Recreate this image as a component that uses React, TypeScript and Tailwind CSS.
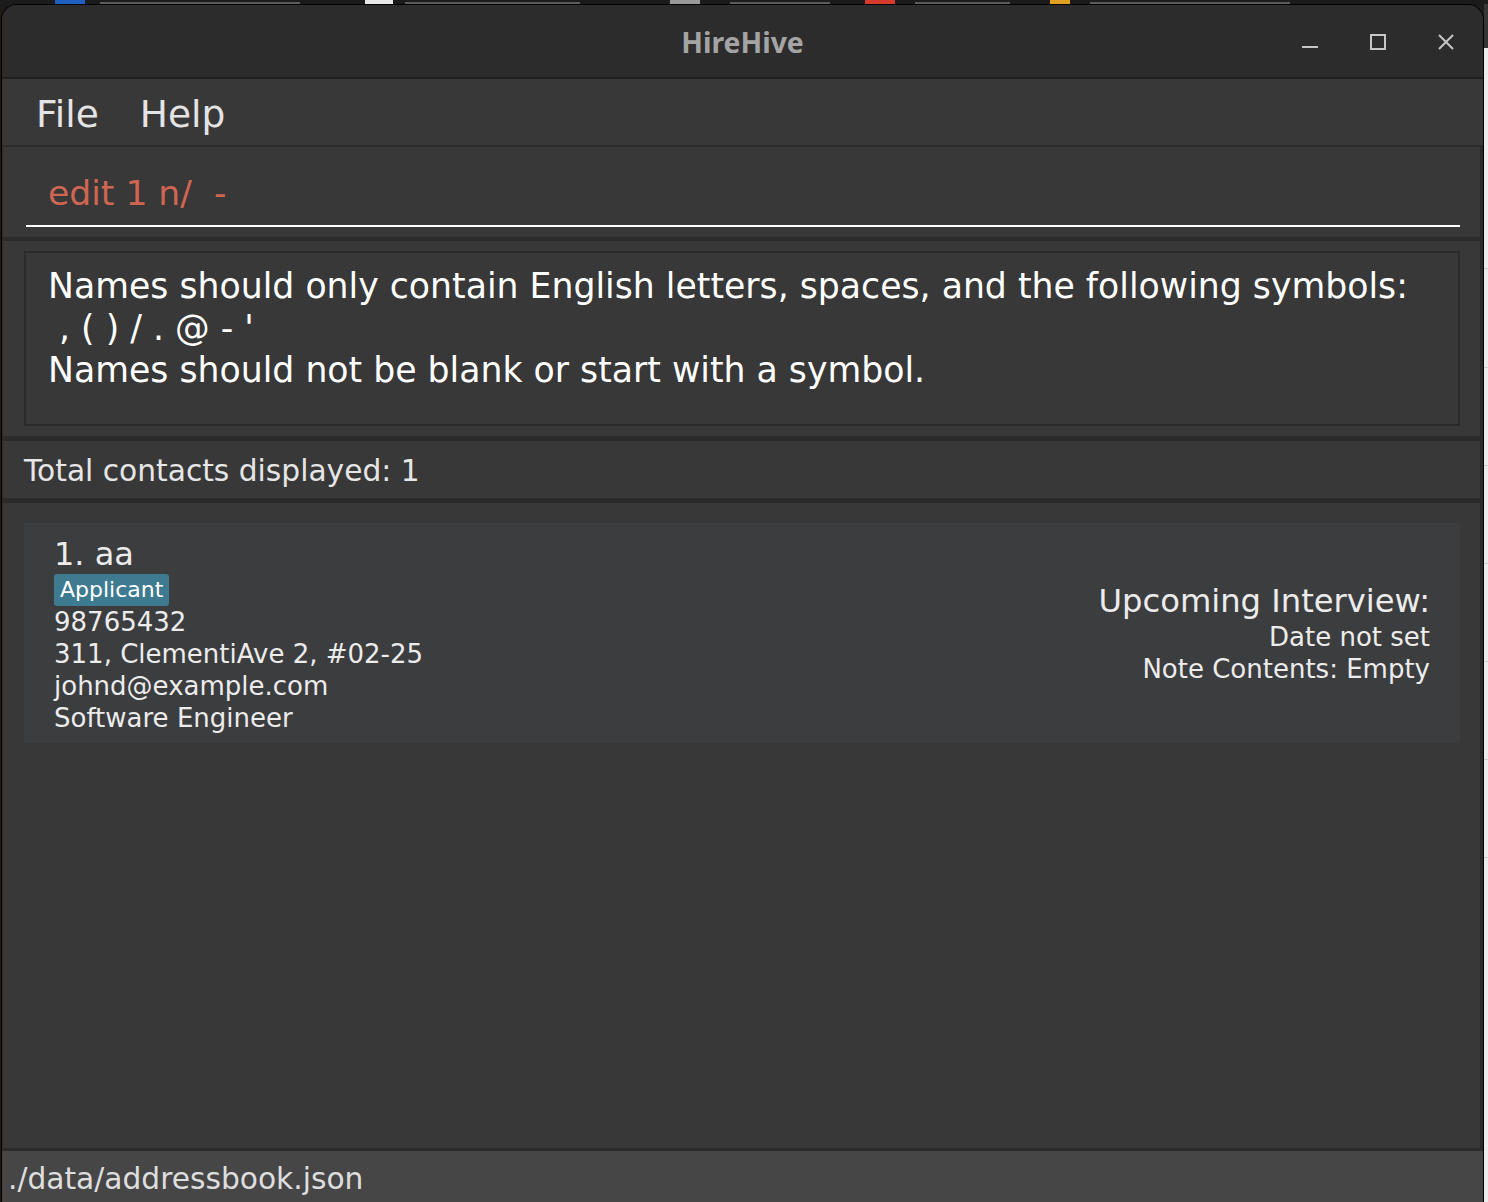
/** HireHive main window — dark JavaFX-style address book shell. */

function TaskbarStrip() {
  // only the bottom few pixels of the desktop taskbar peek out above the window
  return (
    <div className="flex h-[4px] items-end bg-[#1b1b1b]">
      <div className="ml-[55px] h-[4px] w-[30px] bg-[#1f5fbf]" />
      <div className="ml-[15px] h-[2px] w-[200px] bg-[#5a5a5a]" />
      <div className="ml-[65px] h-[4px] w-[28px] bg-[#e8e8e8]" />
      <div className="ml-[12px] h-[2px] w-[175px] bg-[#5a5a5a]" />
      <div className="ml-[90px] h-[4px] w-[30px] bg-[#9a9a9a]" />
      <div className="ml-[30px] h-[2px] w-[100px] bg-[#5a5a5a]" />
      <div className="ml-[35px] h-[4px] w-[30px] bg-[#d83a2e]" />
      <div className="ml-[20px] h-[2px] w-[95px] bg-[#5a5a5a]" />
      <div className="ml-[40px] h-[4px] w-[20px] bg-[#e0a020]" />
      <div className="ml-[20px] h-[2px] w-[200px] bg-[#5a5a5a]" />
    </div>
  );
}

function WindowControls() {
  return (
    <div className="flex items-center justify-end gap-[52px] pr-[29px] text-[#c6c6c6]">
      <svg width="16" height="16" viewBox="0 0 16 16" fill="none" stroke="currentColor" strokeWidth="2">
        <path d="M0 13h16" />
      </svg>
      <svg width="16" height="16" viewBox="0 0 16 16" fill="none" stroke="currentColor" strokeWidth="2">
        <rect x="1" y="1" width="14" height="14" />
      </svg>
      <svg width="16" height="16" viewBox="0 0 16 16" fill="none" stroke="currentColor" strokeWidth="2">
        <path d="M1 1l14 14M15 1L1 15" />
      </svg>
    </div>
  );
}

function ContactCard() {
  return (
    <div className="flex h-[220px] items-center justify-between bg-[#3c3d3f] text-[#ececec]">
      <div className="flex flex-col items-start self-start pl-[30px] pt-[13px]">
        <div className="text-[32px] leading-[37px]">1. aa</div>
        <span className="mt-px flex h-[32px] items-center rounded-[3px] bg-[#3e7b91] px-[6px] text-[22px] leading-[26px] text-white">
          Applicant
        </span>
        <div className="text-[26px] leading-[32px]">
          <div>98765432</div>
          <div>311, ClementiAve 2, #02-25</div>
          <div>johnd@example.com</div>
          <div>Software Engineer</div>
        </div>
      </div>
      <div className="flex flex-col items-end pr-[30px]">
        <div className="text-[32.2px] leading-[39px]">Upcoming Interview:</div>
        <div className="text-[26px] leading-[32px]">Date not set</div>
        <div className="text-[26px] leading-[32px]">Note Contents: Empty</div>
      </div>
    </div>
  );
}

function Window() {
  return (
    <div className="flex w-[1483px] flex-col overflow-hidden rounded-t-[16px] border-x border-t border-black bg-[#2c2c2c]">
      {/* Title bar */}
      <div className="grid h-[74px] shrink-0 grid-cols-[1fr_auto_1fr] items-center border-b-2 border-[#1f1f1f] bg-[#2c2c2c] pt-[2px]">
        <div />
        <div className="font-['Noto_Sans',sans-serif] text-[28.4px] font-bold leading-[38px] text-[#a4a4a4]">
          HireHive
        </div>
        <WindowControls />
      </div>

      {/* Menu bar */}
      <div className="flex h-[66px] shrink-0 items-start gap-[41px] bg-[#383838] pl-[34px] pt-[13px] text-[37.5px] leading-[44px] text-[#e4e4e4]">
        <span>File</span>
        <span>Help</span>
      </div>

      {/* Panes */}
      <div className="flex min-h-0 flex-1 flex-col bg-[#2b2b2b] pb-[3px] pl-px pr-[3px] pt-[2px]">
        <div className="h-[90px] shrink-0 bg-[#383838] pl-[23px] pr-[20px] pt-[26px]">
          <div className="whitespace-pre border-b-2 border-white pb-[12px] pl-[22px] text-[34.6px] leading-[40px] text-[#d06651]">
            edit 1 n/  -
          </div>
        </div>

        <div className="mt-[4px] h-[195px] shrink-0 bg-[#383838] pl-[21px] pr-[20px] pt-[10px]">
          <div className="h-[175px] whitespace-pre border-2 border-[#2b2b2b] pl-[22px] pt-[12px] text-[34.7px] leading-[42px] text-white">
            <div>Names should only contain English letters, spaces, and the following symbols:</div>
            <div> , ( ) / . @ - '</div>
            <div>Names should not be blank or start with a symbol.</div>
          </div>
        </div>

        <div className="mt-[5px] h-[57px] shrink-0 bg-[#383838] pl-[21px] pt-[13px] text-[29.7px] leading-[34px] text-[#e6e6e6]">
          Total contacts displayed: 1
        </div>

        <div className="mt-[5px] min-h-0 flex-1 bg-[#383838] pl-[21px] pr-[20px] pt-[20px]">
          <ContactCard />
        </div>
      </div>

      {/* Status bar */}
      <div className="h-[51px] shrink-0 bg-[#464646] pl-[6px] pt-[11px] text-[29.7px] leading-[34px] text-[#dedede]">
        ./data/addressbook.json
      </div>
    </div>
  );
}

export default function App() {
  return (
    <div className="flex h-[1202px] w-[1488px] flex-col overflow-hidden bg-[#1b1b1b] font-['DejaVu_Sans',sans-serif]">
      <TaskbarStrip />
      <div className="flex min-h-0 flex-1">
        <div className="w-px bg-[#24170f]" />
        <Window />
        <div className="flex w-[4px] flex-col">
          <div className="h-[44px] bg-[#363636]" />
          <div className="flex flex-1 flex-col bg-[#ececec]">
            <div className="mt-[220px] h-px bg-[#cfcfcf]" />
            <div className="mt-[98px] h-px bg-[#cfcfcf]" />
            <div className="mt-[97px] h-px bg-[#cfcfcf]" />
            <div className="mt-[97px] h-px bg-[#cfcfcf]" />
            <div className="mt-[97px] h-px bg-[#cfcfcf]" />
            <div className="mt-[97px] h-px bg-[#cfcfcf]" />
            <div className="mt-[97px] h-px bg-[#cfcfcf]" />
          </div>
        </div>
      </div>
    </div>
  );
}
